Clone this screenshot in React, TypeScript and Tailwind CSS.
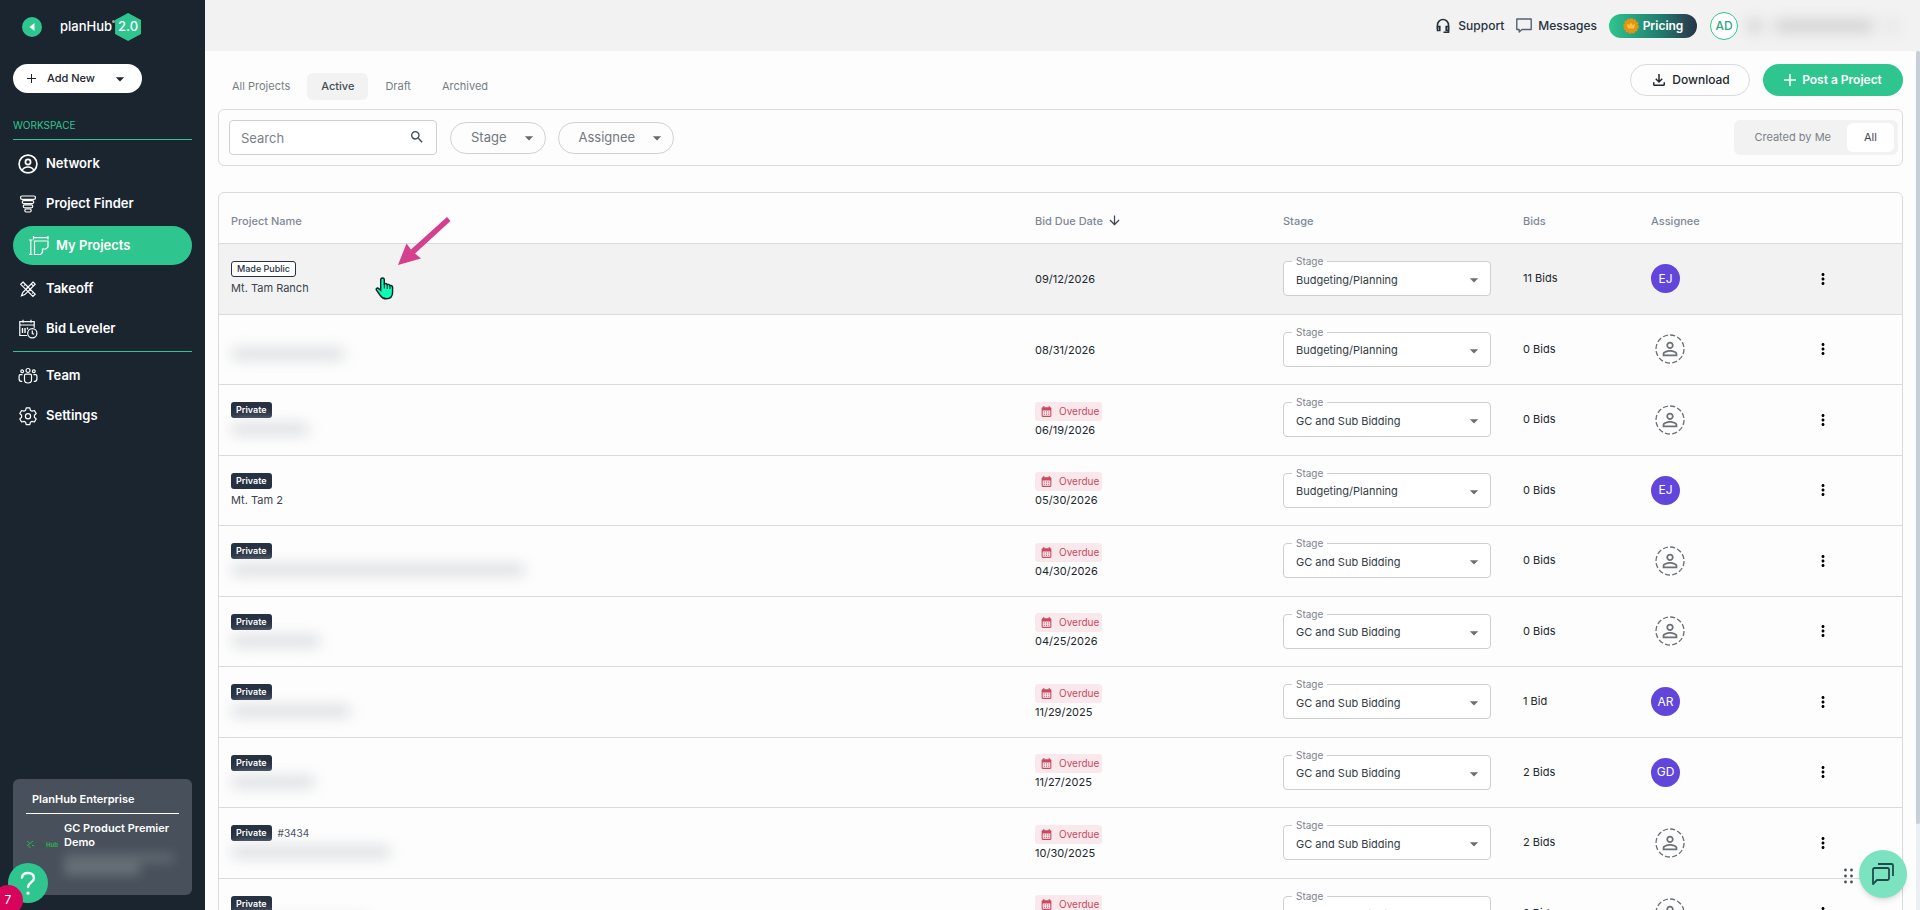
import React, { useState } from "react";
import {
  MdArrowDownward,
  MdArrowDropDown,
  MdCalendarMonth,
  MdMoreVert,
  MdOutlineFileDownload,
  MdPersonOutline,
  MdSearch,
} from "react-icons/md";

type Project = {
  id: number;
  badge?: "Made Public" | "Private";
  name?: string;
  hiddenWidth?: string;
  code?: string;
  due: string;
  overdue: boolean;
  stage: string;
  bids: string;
  assignee?: string;
};

const stages = ["Budgeting/Planning", "GC and Sub Bidding"];

const projects: Project[] = [
  { id: 1, badge: "Made Public", name: "Mt. Tam Ranch", due: "09/12/2026", overdue: false, stage: stages[0], bids: "11 Bids", assignee: "EJ" },
  { id: 2, hiddenWidth: "w-[114px]", due: "08/31/2026", overdue: false, stage: stages[0], bids: "0 Bids" },
  { id: 3, badge: "Private", hiddenWidth: "w-[78px]", due: "06/19/2026", overdue: true, stage: stages[1], bids: "0 Bids" },
  { id: 4, badge: "Private", name: "Mt. Tam 2", due: "05/30/2026", overdue: true, stage: stages[0], bids: "0 Bids", assignee: "EJ" },
  { id: 5, badge: "Private", hiddenWidth: "w-[294px]", due: "04/30/2026", overdue: true, stage: stages[1], bids: "0 Bids" },
  { id: 6, badge: "Private", hiddenWidth: "w-[90px]", due: "04/25/2026", overdue: true, stage: stages[1], bids: "0 Bids" },
  { id: 7, badge: "Private", hiddenWidth: "w-[120px]", due: "11/29/2025", overdue: true, stage: stages[1], bids: "1 Bid", assignee: "AR" },
  { id: 8, badge: "Private", hiddenWidth: "w-[84px]", due: "11/27/2025", overdue: true, stage: stages[1], bids: "2 Bids", assignee: "GD" },
  { id: 9, badge: "Private", code: "#3434", hiddenWidth: "w-[160px]", due: "10/30/2025", overdue: true, stage: stages[1], bids: "2 Bids" },
  { id: 10, badge: "Private", hiddenWidth: "w-[140px]", due: "10/24/2025", overdue: true, stage: stages[1], bids: "2 Bids" },
];

const iconProps = {
  width: 20,
  height: 20,
  viewBox: "0 0 20 20",
  fill: "none",
  stroke: "currentColor",
  "aria-hidden": true,
};

const NetworkIcon = () => (
  <svg {...iconProps} strokeWidth="1.7">
    <circle cx="10" cy="10" r="8.9" />
    <circle cx="10" cy="8" r="2.6" />
    <path d="M4.200 16.400c1-2.400 3-3.400 5.800-3.400s4.800 1 5.800 3.400" />
  </svg>
);

const FinderIcon = () => (
  <svg {...iconProps} strokeWidth="1.2">
    <rect x="2.500" y="2" width="15" height="3.400" rx="1.700" />
    <rect x="4.200" y="6.600" width="11.600" height="3" rx="1.500" />
    <rect x="5.200" y="10.800" width="9.600" height="3" rx="1.500" />
    <rect x="6.800" y="15" width="6.400" height="3" rx="1.500" />
  </svg>
);

const ProjectsIcon = () => (
  <svg {...iconProps} strokeWidth="1.2">
    <path d="M4.500 1.700h14.500M4.500 0v3.400M19 0v3.400M1.800 4v14.500M0 4h3.500M0 18.500h3.500" />
    <path d="M5.500 5H19v6l-2 2h-3.500v3.500l-2 2h-6z" />
  </svg>
);

const TakeoffIcon = () => (
  <svg {...iconProps} strokeWidth="1.2">
    <path d="M5 3l12.200 12.200-2.300 2.300L2.700 5.300zM7.300 5.300L6 6.600M10 8l-1.300 1.300M12.800 10.800l-1.300 1.300M15.300 13.300l-1.200 1.200" />
    <path d="M15 3l2.200 2.200L6.800 15.600l-3.300 1.200 1.200-3.300zM13.200 4.800L15.400 7" />
  </svg>
);

const BidIcon = () => (
  <svg {...iconProps} strokeWidth="1.2">
    <path d="M9 16.500H1.800V2.700h14.400v6M1.800 6h14.400M5 .8v3M13 .8v3" />
    <path d="M4.500 9v5M7 9v5M9.500 8.500v2" strokeWidth="1.4" />
    <circle cx="14.300" cy="14.200" r="4.600" />
    <path d="M14.300 11.500v3l1.800.8" />
  </svg>
);

const TeamIcon = () => (
  <svg {...iconProps} strokeWidth="1.2">
    <circle cx="10" cy="4.500" r="2" />
    <circle cx="4.200" cy="5.300" r="1.400" />
    <circle cx="15.800" cy="5.300" r="1.400" />
    <path d="M6.500 14V9.500c0-.8.600-1.300 1.300-1.300h4.400c.7 0 1.300.5 1.300 1.300V14c0 1.800-1.300 3-3.500 3s-3.500-1.200-3.500-3z" />
    <path d="M4.500 8.700H2.300c-.8 0-1.200.5-1.200 1.200v3c0 1.800 1 2.600 3.200 2.600M15.500 8.700h2.200c.8 0 1.200.5 1.200 1.200v3c0 1.800-1 2.600-3.200 2.600" />
  </svg>
);

const SettingsIcon = () => (
  <svg {...iconProps} strokeWidth="1.2" strokeLinejoin="round">
    <path d="M8.200 1.800h3.600l.6 2.500 1.600.9 2.400-.7 1.800 3.100-1.800 1.700v1.900l1.800 1.700-1.800 3.100-2.400-.7-1.600.9-.6 2.500H8.200l-.6-2.500-1.600-.9-2.400.7-1.800-3.100 1.800-1.700V9.300L1.800 7.600l1.800-3.100 2.400.7 1.600-.9z" />
    <circle cx="10" cy="10.200" r="2.600" />
  </svg>
);

const SideLink = ({ label, icon, active = false }: { label: string; icon: React.ReactNode; active?: boolean }) => (
  <a
    href="#"
    aria-current={active ? "page" : undefined}
    className={
      active
        ? "my-[3px] flex h-[39px] items-center gap-[7px] rounded-full bg-[#2fc58e] pl-4 text-[13px] font-semibold text-white"
        : "flex h-10 items-center gap-2 pl-[5px] pt-px text-[13px] font-semibold text-white"
    }
  >
    {icon}
    {label}
  </a>
);

const Sidebar = () => (
  <aside className="relative flex w-[205px] shrink-0 flex-col bg-[#1a2530] px-[13px] pb-[15px]">
    <div className="flex h-[54px] items-center gap-[18px] pl-[9px]">
      <button aria-label="Collapse menu" className="flex size-5 items-center justify-center rounded-full bg-[#2fc58e]">
        <svg width="6" height="8" viewBox="0 0 6 8" fill="#fff" aria-hidden="true">
          <path d="M5.500 0v8L.5 4z" />
        </svg>
      </button>
      <a href="#" className="flex items-center text-[13px] font-medium text-white">
        planHub
        <span className="mb-3 size-[3px] rounded-full bg-white/60" />
        <span className="flex h-7 w-[26px] items-center justify-center bg-[#2fc58e] text-[13px] font-medium [clip-path:polygon(50%_0,100%_25%,100%_75%,50%_100%,0_75%,0_25%)]">
          2.0
        </span>
      </a>
    </div>

    <button className="mt-[10px] flex h-[29px] w-[129px] items-center rounded-full bg-white pl-[14px] pr-3 text-[11px] font-medium text-[#1c242c]">
      <svg width="9" height="9" viewBox="0 0 9 9" stroke="currentColor" aria-hidden="true">
        <path d="M4.500 0v9M0 4.500h9" />
      </svg>
      <span className="ml-[11px] grow text-left">Add New</span>
      <MdArrowDropDown size={20} />
    </button>

    <h2 className="mt-6 border-b border-[#2fc58e] pb-[6px] text-[10px] leading-4 text-[#2fc58e]">WORKSPACE</h2>
    <nav className="mt-[3px]">
      <SideLink label="Network" icon={<NetworkIcon />} />
      <SideLink label="Project Finder" icon={<FinderIcon />} />
      <SideLink label="My Projects" icon={<ProjectsIcon />} active />
      <SideLink label="Takeoff" icon={<TakeoffIcon />} />
      <SideLink label="Bid Leveler" icon={<BidIcon />} />
      <div className="my-[3px] h-px bg-[#2fc58e]" />
      <SideLink label="Team" icon={<TeamIcon />} />
      <SideLink label="Settings" icon={<SettingsIcon />} />
    </nav>

    <section className="mt-auto h-[116px] rounded-md bg-[#47505b] px-[13px] pt-3 text-[11px] font-semibold text-white">
      <h3 className="border-b border-white pb-[6px] pl-[6px] leading-4">PlanHub Enterprise</h3>
      <div className="mt-[7px] flex items-start gap-[6px]">
        <svg width="32" height="12" viewBox="0 0 32 12" className="mt-[18px] shrink-0" aria-hidden="true">
          <path d="M1 2l3 2.500L7 2M4 4.500L1.500 6l3 3M6 6.500h2" fill="none" stroke="#27b34a" />
          <text x="9" y="8" fontSize="6" fill="#3b5550">plan</text>
          <text x="20" y="8" fontSize="6" fontWeight="700" fill="#27b34a">Hub</text>
        </svg>
        <div>
          <p className="leading-[14px]">GC Product Premier Demo</p>
          <div className="mt-1 h-[10px] w-[110px] bg-white/15 blur-[6px]" />
          <div className="h-3 w-[76px] bg-white/20 blur-[6px]" />
        </div>
      </div>
    </section>

    <button aria-label="Help" className="absolute bottom-[7px] left-2 flex size-10 items-center justify-center rounded-full bg-[#2fc58e] text-white">
      <svg width="16" height="24" viewBox="0 0 16 24" fill="none" stroke="currentColor" strokeWidth="2.4" strokeLinecap="round" aria-hidden="true">
        <path d="M2 6.500C2.300 3.500 4.800 2 8 2c3.400 0 6 1.800 6 5 0 4.500-6 4.500-6 9" />
        <path d="M8 22v.2" strokeWidth="3.200" />
      </svg>
    </button>
    <span className="absolute -bottom-[5px] -left-[7px] flex size-[30px] items-center justify-center rounded-full bg-[#d8045b] text-xs text-white">7</span>
  </aside>
);

const TopBar = () => (
  <header className="flex h-[51px] shrink-0 items-center justify-end bg-[#f2f2f2] pr-[23px] text-xs font-medium text-[#26313d]">
    <a href="#" className="flex items-center gap-2">
      <svg width="14" height="16" viewBox="0 0 14 16" fill="none" stroke="currentColor" strokeWidth="1.6" aria-hidden="true">
        <path d="M1.500 11V7a5.500 5.500 0 0 1 11 0v7.200H7.500" />
        <path d="M1.500 8.500h2.300v4H1.500zM12.500 8.500h-2.300v4h2.300z" />
      </svg>
      Support
    </a>
    <a href="#" className="ml-3 flex items-center gap-[6px]">
      <svg width="16" height="15" viewBox="0 0 16 15" fill="none" stroke="#566270" strokeWidth="1.4" strokeLinejoin="round" aria-hidden="true">
        <path d="M.8 1h14.400v10.500H6L3.200 14v-2.500H.8z" />
      </svg>
      Messages
    </a>
    <button className="ml-3 flex h-6 w-[88px] items-center justify-center gap-1 rounded-full bg-linear-to-r from-[#2fc58e] via-[#207a6c] via-60% to-[#26334a] font-semibold text-white">
      <svg width="16" height="16" viewBox="0 0 16 16" aria-hidden="true">
        <circle cx="8" cy="8" r="7" fill="#e0951a" stroke="#e0951a" strokeWidth="1.6" strokeDasharray="2.200 1.400" />
        <path d="M4 5.500l2.200 1.800L8 4.500l1.800 2.800L12 5.500l-.8 5H4.800z" fill="#fdc22c" />
      </svg>
      Pricing
    </button>
    <button aria-label="Account" className="ml-[13px] flex items-center gap-[9px]">
      <span className="flex size-7 items-center justify-center rounded-full border border-[#2fc58e] bg-white text-xs text-[#2fa67c]">AD</span>
      <span className="flex gap-3 blur-[7px]">
        <span className="h-3 w-4 bg-[#d3d3d3]" />
        <span className="h-3 w-[98px] bg-[#d0d0d0]" />
        <span className="h-3 w-3 bg-[#e3e3e3]" />
      </span>
    </button>
  </header>
);

const FilterPill = ({ label }: { label: string }) => (
  <button className="flex h-8 items-center gap-3 rounded-full border border-[#cfd2d4] pl-5 pr-[6px] text-[13px] text-[#72787f]">
    {label}
    <MdArrowDropDown size={20} className="text-[#666b70]" />
  </button>
);

const StageSelect = ({ id, value }: { id: number; value: string }) => (
  <div className="relative h-[35px] w-[208px] rounded-sm border border-[#cdcfd1] bg-white">
    <label
      htmlFor={`stage-${id}`}
      className="absolute -top-[10px] left-2 bg-linear-to-b from-transparent from-50% to-white to-50% px-1 text-[10px] leading-[18px] text-[#7d838e]"
    >
      Stage
    </label>
    <select id={`stage-${id}`} defaultValue={value} className="h-full w-full appearance-none bg-transparent pl-3 pt-[3px] text-[11px] text-[#333b45]">
      {stages.map((stage) => (
        <option key={stage}>{stage}</option>
      ))}
    </select>
    <MdArrowDropDown size={20} className="pointer-events-none absolute right-[6px] top-2 text-[#6b6f74]" />
  </div>
);

const ProjectRow = ({ project }: { project: Project }) => (
  <tr className="border-t border-[#d9dbdd] odd:h-[71px] even:h-[70px] first:bg-[#f2f2f2]">
    <td className="pl-3 pt-px">
      {project.badge && (
        <div className="mb-0.5 flex items-center gap-[6px]">
          <span
            className={
              project.badge === "Private"
                ? "rounded-[3px] bg-[#263142] px-[5px] text-[9px] font-semibold leading-4 text-white"
                : "rounded-[3px] border border-[#263142] bg-white px-[5px] text-[9px] font-medium leading-[14px] text-[#263142]"
            }
          >
            {project.badge}
          </span>
          {project.code && <span className="text-[10px] leading-4 text-[#4b535c]">{project.code}</span>}
        </div>
      )}
      {project.name ? (
        <a href="#" className="block leading-[18px] text-[#3b434c]">{project.name}</a>
      ) : (
        <div className={project.badge ? "flex h-[18px] items-center" : "flex h-[26px] items-end pb-[3px]"}>
          <div className={`h-3 ${project.hiddenWidth} rounded-md bg-[#dcdee1] blur-[7px]`} />
        </div>
      )}
    </td>
    <td className="pl-3 pt-px">
      {project.overdue && (
        <div className="flex h-[19px] w-[67px] items-center gap-[6px] rounded-[3px] bg-[#fae9ec] pl-[5px] text-[10px] text-[#c94a5f]">
          <MdCalendarMonth size={13} />
          Overdue
        </div>
      )}
      <div className="leading-[18px]">{project.due}</div>
    </td>
    <td className="pl-3">
      <StageSelect id={project.id} value={project.stage} />
    </td>
    <td className="pl-3">{project.bids}</td>
    <td className="pl-3">
      {project.assignee ? (
        <span className="flex size-[29px] items-center justify-center rounded-full bg-[#6246dc] text-xs text-white">{project.assignee}</span>
      ) : (
        <button aria-label="Assign" className="ml-1 grid size-[30px] place-items-center text-[#6a7076] *:[grid-area:1/1]">
          <svg width="30" height="30" viewBox="0 0 30 30" fill="none" stroke="currentColor" aria-hidden="true">
            <circle cx="15" cy="15" r="14" strokeWidth="1.3" strokeDasharray="5 2.300" />
          </svg>
          <MdPersonOutline size={22} />
        </button>
      )}
    </td>
    <td className="pl-1">
      <button aria-label="Project actions" className="block text-black">
        <MdMoreVert size={18} />
      </button>
    </td>
  </tr>
);

const App = () => {
  const [tab, setTab] = useState("Active");
  const [owner, setOwner] = useState("All");

  return (
    <div className="flex h-screen overflow-hidden bg-[#fdfdfd] font-['Inter',sans-serif] text-[11px] text-[#20272e]">
      <Sidebar />
      <div className="flex min-w-0 grow flex-col">
        <TopBar />
        <div className="flex min-h-0 grow">
          <main className="relative min-w-0 grow overflow-hidden px-[13px] pt-[13px]">
            <div className="flex items-start justify-between">
              <div className="mt-[9px] flex gap-[3px]">
                {["All Projects", "Active", "Draft", "Archived"].map((name) => (
                  <button
                    key={name}
                    onClick={() => setTab(name)}
                    className={`h-[27px] rounded-md px-[14px] ${tab === name ? "bg-[#f2f2f2] font-medium text-[#454c54]" : "text-[#777d84]"}`}
                  >
                    {name}
                  </button>
                ))}
              </div>
              <div className="flex gap-[13px] text-xs">
                <button className="flex h-8 w-[120px] items-center justify-center gap-1 rounded-full border border-[#d9dbdd] font-medium">
                  <MdOutlineFileDownload size={18} />
                  Download
                </button>
                <button className="flex h-8 w-[140px] items-center justify-center gap-[6px] rounded-full bg-[#2fc58e] font-semibold text-white">
                  <svg width="12" height="12" viewBox="0 0 12 12" stroke="currentColor" strokeWidth="1.7" aria-hidden="true">
                    <path d="M6 0v12M0 6h12" />
                  </svg>
                  Post a Project
                </button>
              </div>
            </div>

            <div className="mt-[9px] flex h-[57px] items-center rounded-md border border-[#d9dbdd] pl-[10px] pr-1">
              <div className="relative h-[35px] w-[208px]">
                <input
                  type="text"
                  aria-label="Search"
                  placeholder="Search"
                  className="h-full w-full rounded-sm border border-[#cfd2d4] bg-white pl-[11px] pr-9 text-[13px] placeholder:text-[#7b8188]"
                />
                <MdSearch size={16} className="absolute right-3 top-[9px] text-[#3f4750]" />
              </div>
              <div className="ml-[13px] flex gap-3">
                <FilterPill label="Stage" />
                <FilterPill label="Assignee" />
              </div>
              <div className="ml-auto flex h-[35px] items-center rounded-md bg-[#f2f2f2] px-1">
                {["Created by Me", "All"].map((name) => (
                  <button
                    key={name}
                    onClick={() => setOwner(name)}
                    className={`h-[29px] min-w-[47px] rounded-md px-4 ${owner === name ? "bg-white text-[#3f464e]" : "text-[#7b8188]"}`}
                  >
                    {name}
                  </button>
                ))}
              </div>
            </div>

            <div className="mt-[26px] rounded-md border border-[#d9dbdd]">
              <table className="w-full table-fixed text-left">
                <thead>
                  <tr className="h-[50px] text-[#7e8998]">
                    <th className="pl-3 pt-[6px] font-medium">Project Name</th>
                    <th className="w-[248px] pl-3 pt-[6px] font-medium" aria-sort="descending">
                      <button className="flex items-center gap-1">
                        Bid Due Date
                        <MdArrowDownward size={15} className="text-[#3f4750]" />
                      </button>
                    </th>
                    <th className="w-[240px] pl-3 pt-[6px] font-medium">Stage</th>
                    <th className="w-[128px] pl-3 pt-[6px] font-medium">Bids</th>
                    <th className="w-[171px] pl-3 pt-[6px] font-medium">Assignee</th>
                    <th className="w-[92px]" aria-label="Actions" />
                  </tr>
                </thead>
                <tbody>
                  {projects.map((project) => (
                    <ProjectRow key={project.id} project={project} />
                  ))}
                </tbody>
              </table>
            </div>

            {/* pointer callout over the first row */}
            <svg width="76" height="84" viewBox="0 0 76 84" className="pointer-events-none absolute left-[170px] top-[165px]" aria-hidden="true">
              <path d="M72 1l3.500 4L40 37.500l6 5L23 49l8.500-21.500 4.500 6z" fill="#d63f8e" />
              <path
                d="M7.500 62c1.200 0 1.800.8 1.800 1.800v4c1.500-.7 2.600 0 2.900.8 1.500-.5 2.500.2 2.800 1 1.600-.4 2.600.4 2.600 2V76c0 4.500-2.600 6.800-6.300 6.800-3.400 0-4.800-1.500-6-3.300l-3.800-5.300c-.9-1.500.7-2.800 2-1.800l2.200 2V63.800c0-1 .6-1.800 1.800-1.800z"
                fill="#0dfcb6"
                stroke="#10241f"
                strokeWidth="1.4"
              />
              <path d="M9.300 67.500v5M12.200 68.500v4.500M15 69.500V73" stroke="#10241f" />
            </svg>

            <div className="absolute bottom-3 right-[9px] flex items-center gap-[6px]">
              <svg width="9" height="16" viewBox="0 0 9 16" fill="#4a4f55" className="mt-1" aria-hidden="true">
                <circle cx="1.500" cy="2" r="1.400" /><circle cx="7.500" cy="2" r="1.400" />
                <circle cx="1.500" cy="8" r="1.400" /><circle cx="7.500" cy="8" r="1.400" />
                <circle cx="1.500" cy="14" r="1.400" /><circle cx="7.500" cy="14" r="1.400" />
              </svg>
              <button aria-label="Open chat" className="flex size-12 items-center justify-center rounded-full bg-[#7be3c0] text-[#1f4a4c] shadow-md">
                <svg width="22" height="22" viewBox="0 0 22 22" fill="none" stroke="currentColor" strokeWidth="1.8" strokeLinejoin="round" aria-hidden="true">
                  <path d="M2.500 5h13a1.500 1.500 0 0 1 1.500 1.500v9a1.500 1.500 0 0 1-1.500 1.500H5l-4 4V6.500A1.500 1.500 0 0 1 2.500 5z" />
                  <path d="M6 1h13.500A1.500 1.500 0 0 1 21 2.500V13" />
                </svg>
              </button>
            </div>
          </main>
          <div className="w-1 shrink-0 bg-[#eaf0f3]" aria-hidden="true">
            <div className="h-[90%] rounded-full bg-[#c8cfd8]" />
          </div>
        </div>
      </div>
    </div>
  );
};

export default App;
